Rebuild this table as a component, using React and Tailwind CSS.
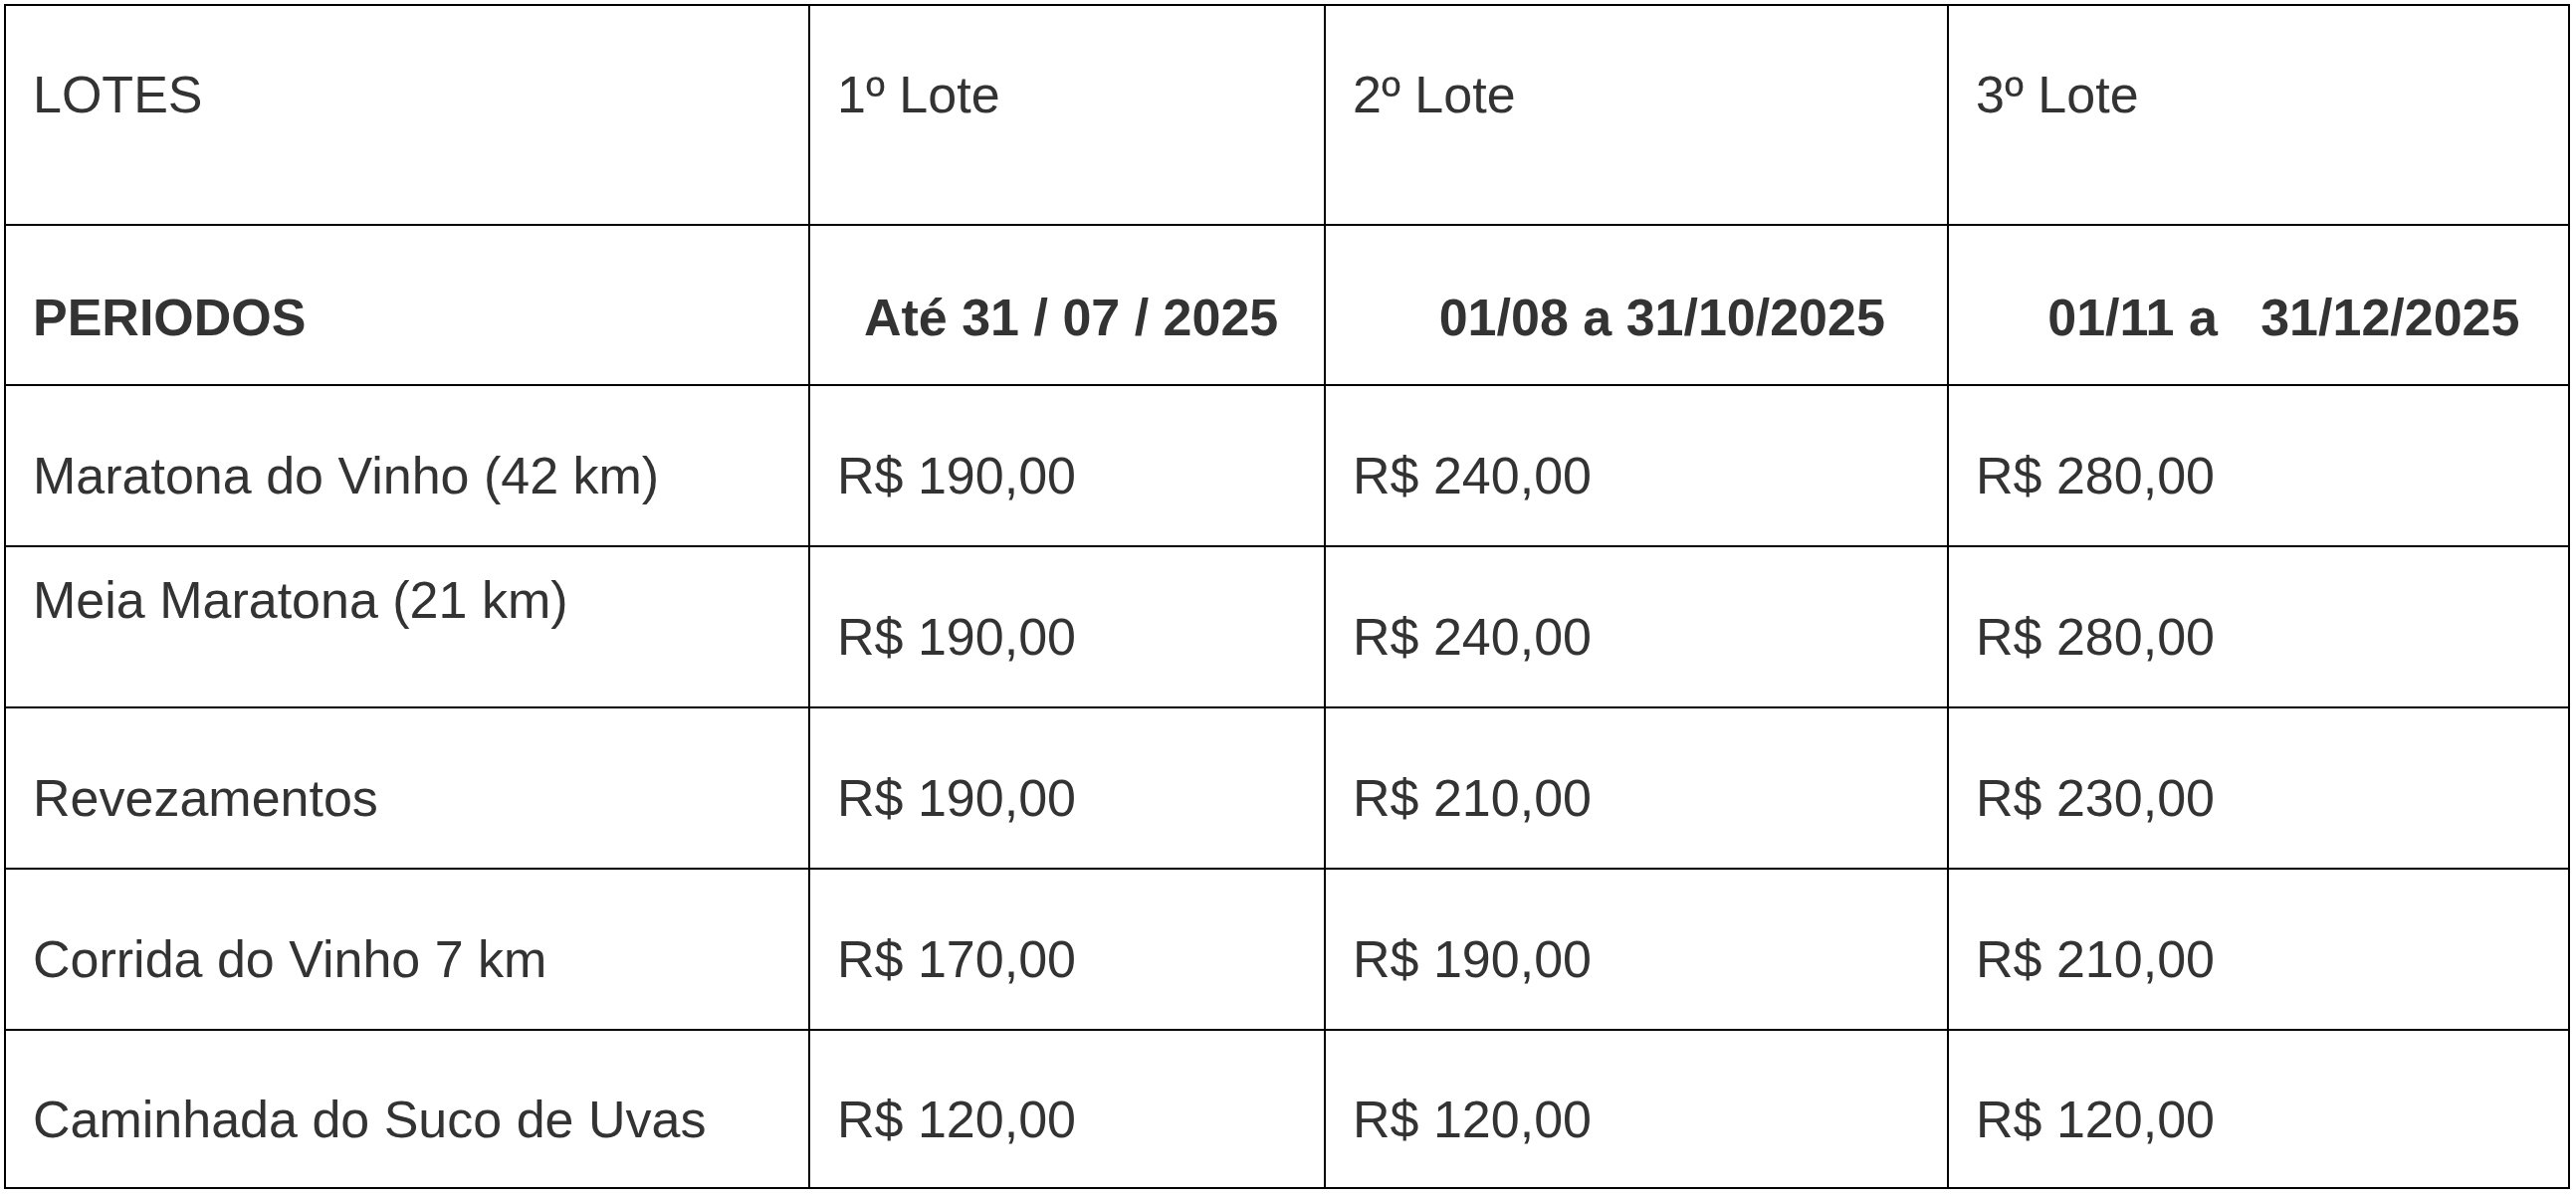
import React from "react";

const font = "font-['Liberation_Sans',Arial,Helvetica,sans-serif]";

const rows = [
  ["Maratona do Vinho (42 km)", "R$ 190,00", "R$ 240,00", "R$ 280,00"],
  ["Meia Maratona (21 km)", "R$ 190,00", "R$ 240,00", "R$ 280,00"],
  ["Revezamentos", "R$ 190,00", "R$ 210,00", "R$ 230,00"],
  ["Corrida do Vinho 7 km", "R$ 170,00", "R$ 190,00", "R$ 210,00"],
  ["Caminhada do Suco de Uvas", "R$ 120,00", "R$ 120,00", "R$ 120,00"],
];

function Cell({ children, className = "" }) {
  return (
    <div className={`flex bg-white pl-[27px] whitespace-pre ${className}`}>
      <span>{children}</span>
    </div>
  );
}

export default function App() {
  return (
    <div className={`min-h-screen w-full bg-white pl-[4px] pt-[4px] ${font} text-[52px] leading-[60px] text-[#333333]`}>
      <div className="grid w-[2578px] grid-cols-[806px_516px_624px_622px] grid-rows-[219px_159px_160px_160px_160px_160px_157px] gap-[2px] bg-black p-[2px]">
        {/* Header row */}
        <Cell className="items-start pt-[59px]">LOTES</Cell>
        <Cell className="items-start pt-[59px]">1º Lote</Cell>
        <Cell className="items-start pt-[59px]">2º Lote</Cell>
        <Cell className="items-start pt-[59px]">3º Lote</Cell>

        {/* Periods row */}
        <Cell className="items-center pt-[25px] font-bold">PERIODOS</Cell>
        <Cell className="items-center pt-[25px] font-bold">{"  Até 31 / 07 / 2025"}</Cell>
        <Cell className="items-center pt-[25px] font-bold">{"      01/08 a 31/10/2025"}</Cell>
        <Cell className="items-center pt-[25px] font-bold">{"     01/11 a   31/12/2025"}</Cell>

        {rows.map((r, i) => (
          <React.Fragment key={i}>
            <Cell className={i === 1 ? "items-start pt-[23px]" : "items-center pt-[20px]"}>{r[0]}</Cell>
            <Cell className="items-center pt-[20px]">{r[1]}</Cell>
            <Cell className="items-center pt-[20px]">{r[2]}</Cell>
            <Cell className="items-center pt-[20px]">{r[3]}</Cell>
          </React.Fragment>
        ))}
      </div>
    </div>
  );
}
